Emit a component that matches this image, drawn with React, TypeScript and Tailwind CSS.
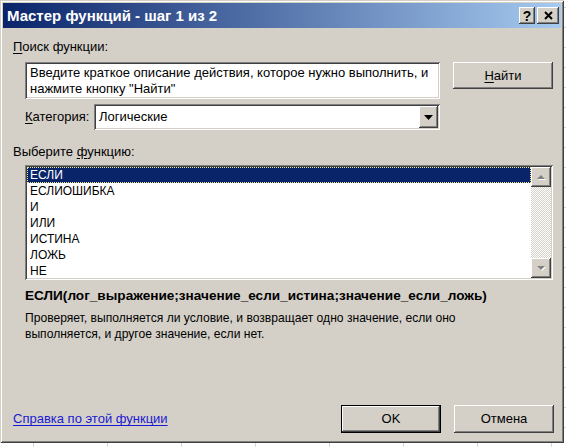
import React from "react";

const raised =
  "shadow-[inset_-1px_-1px_#404040,inset_1px_1px_#ffffff,inset_-2px_-2px_#808080,inset_2px_2px_#d4d0c8]";
const sunken =
  "shadow-[inset_1px_1px_#808080,inset_-1px_-1px_#ffffff,inset_2px_2px_#404040,inset_-2px_-2px_#d4d0c8]";

const items = ["ЕСЛИ", "ЕСЛИОШИБКА", "И", "ИЛИ", "ИСТИНА", "ЛОЖЬ", "НЕ"];

function U({ children }: { children: React.ReactNode }) {
  return <span className="underline underline-offset-2">{children}</span>;
}

export default function App() {
  return (
    <div
      className="w-[566px] h-[447px] overflow-hidden bg-white bg-[repeating-linear-gradient(90deg,transparent_0px,transparent_33px,#d6d6d6_33px,#d6d6d6_34px,transparent_34px,transparent_74px),repeating-linear-gradient(0deg,transparent_0px,transparent_19px,#d6d6d6_19px,#d6d6d6_20px)]"
      style={{ fontFamily: '"Liberation Sans", Arial, sans-serif' }}
    >
      <div
        className={`w-[564px] h-[443px] bg-[#d4d0c8] p-[3px] flex flex-col text-[13px] text-black shadow-[inset_1px_1px_#d4d0c8,inset_-1px_-1px_#404040,inset_2px_2px_#ffffff,inset_-2px_-2px_#808080]`}
      >
        {/* Title bar */}
        <div className="h-[25px] flex items-center pl-[4px] pr-[2px] bg-[linear-gradient(90deg,#0a246a,#a6caf0)]">
          <div className="flex-1 text-white font-bold text-[15px] leading-none">
            Мастер функций - шаг 1 из 2
          </div>
          <div className="flex gap-[2px]">
            <div
              className={`w-[16px] h-[17px] bg-[#d4d0c8] ${raised} flex items-center justify-center font-bold text-[14px] leading-none`}
            >
              ?
            </div>
            <div
              className={`w-[22px] h-[17px] bg-[#d4d0c8] ${raised} flex items-center justify-center`}
            >
              <svg width="9" height="9" viewBox="0 0 9 9">
                <path d="M1 1L8 8M8 1L1 8" stroke="#000" strokeWidth="2" />
              </svg>
            </div>
          </div>
        </div>

        {/* Body */}
        <div className="flex-1 flex flex-col pl-[10px] pr-[8px] pb-[7px]">
          <div className="mt-[11px] h-[16px] leading-[16px]">
            <U>П</U>оиск функции:
          </div>

          <div className="mt-[7px] flex items-start">
            <div
              className={`ml-[12px] w-[415px] h-[37px] bg-white ${sunken} px-[5px] pt-[3px] leading-[16px] text-[13px]`}
            >
              Введите краткое описание действия, которое нужно выполнить, и
              нажмите кнопку "Найти"
            </div>
            <div
              className={`ml-[13px] w-[100px] h-[27px] ${raised} flex items-center justify-center`}
            >
              <span>
                <U>Н</U>айти
              </span>
            </div>
          </div>

          <div className="mt-[5px] flex items-center h-[26px]">
            <div className="ml-[12px] w-[69px]">
              <U>К</U>атегория:
            </div>
            <div
              className={`w-[346px] h-[26px] bg-white ${sunken} flex items-center pl-[5px] pr-[2px]`}
            >
              <div className="flex-1">Логические</div>
              <div
                className={`w-[19px] h-[22px] bg-[#d4d0c8] ${raised} flex items-center justify-center`}
              >
                <svg width="9" height="5" viewBox="0 0 9 5">
                  <path d="M0 0H9L4.5 5Z" fill="#000" />
                </svg>
              </div>
            </div>
          </div>

          <div className="mt-[14px] h-[16px] leading-[16px]">
            Выберите <U>ф</U>ункцию:
          </div>

          <div
            className={`mt-[5px] ml-[12px] w-[528px] h-[115px] bg-white ${sunken} p-[2px] flex text-[12px]`}
          >
            <div className="flex-1 flex flex-col">
              {items.map((it, i) => (
                <div
                  key={it}
                  className={
                    i === 0
                      ? "h-[16px] leading-[14px] pl-[2px] bg-[#0a246a] text-white border border-dotted border-[#f2e58c]"
                      : "h-[16px] leading-[16px] pl-[3px]"
                  }
                >
                  {it}
                </div>
              ))}
            </div>
            <div className="w-[20px] flex flex-col">
              <div
                className={`h-[20px] bg-[#d4d0c8] ${raised} flex items-center justify-center`}
              >
                <svg width="11" height="7" viewBox="0 0 11 7">
                  <path d="M6 2L10 6H2Z" fill="#ffffff" />
                  <path d="M5 1L9 5H1Z" fill="#808080" />
                </svg>
              </div>
              <div className="flex-1 bg-[repeating-conic-gradient(#d4d0c8_0%_25%,#ffffff_0%_50%)] bg-[length:2px_2px]" />
              <div
                className={`h-[20px] bg-[#d4d0c8] ${raised} flex items-center justify-center`}
              >
                <svg width="11" height="7" viewBox="0 0 11 7">
                  <path d="M2 2H10L6 6Z" fill="#ffffff" />
                  <path d="M1 1H9L5 5Z" fill="#808080" />
                </svg>
              </div>
            </div>
          </div>

          <div className="mt-[8px] ml-[12px] h-[16px] leading-[16px] font-bold text-[13.6px] whitespace-nowrap">
            ЕСЛИ(лог_выражение;значение_если_истина;значение_если_ложь)
          </div>

          <div className="mt-[6px] ml-[12px] leading-[16px] text-[12.1px] w-[470px]">
            Проверяет, выполняется ли условие, и возвращает одно значение, если
            оно выполняется, и другое значение, если нет.
          </div>

          <div className="mt-auto flex items-center">
            <div className="flex-1 text-[#1a1ad0] underline underline-offset-2">
              Справка по этой функции
            </div>
            <div className="w-[100px] h-[28px] border border-black">
              <div
                className={`w-full h-full ${raised} flex items-center justify-center`}
              >
                OK
              </div>
            </div>
            <div
              className={`ml-[13px] mr-[-1px] w-[100px] h-[28px] ${raised} flex items-center justify-center`}
            >
              Отмена
            </div>
          </div>
        </div>
      </div>
    </div>
  );
}
